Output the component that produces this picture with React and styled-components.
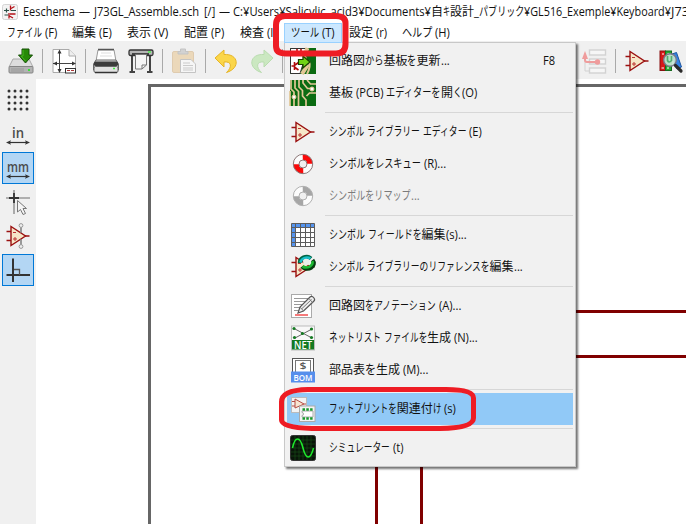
import React, { useLayoutEffect, useRef, useState } from "react";
import styled, { createGlobalStyle } from "styled-components";

const GlobalStyle = createGlobalStyle`
  * { box-sizing: border-box; }
  html, body { margin: 0; background: #fff; overflow: hidden; }
  body {
    font: 12px/20px "Open Sans", "Noto Sans CJK JP", sans-serif;
    color: #111;
  }
  svg { display: block; flex: none; overflow: visible; }
`;

/* ---------- text ---------- */

const Line = styled.span`
  display: inline-flex;
  flex: none;
  width: ${(p) => p.$w}px;
  white-space: pre;
`;
const Run = styled.span`
  display: block;
  flex: none;
`;
const Glyphs = styled.span`
  display: inline-block;
  transform-origin: 0 50%;
`;

const KANA = /[\u3040-\u30ff]/;
const HAN = /[\u4e00-\u9fff]/;
const kindOf = (c) => (KANA.test(c) ? "kana" : HAN.test(c) ? "han" : "latin");

function splitRuns(text) {
  const runs = [];
  for (const c of text) {
    const kind = kindOf(c);
    const last = runs[runs.length - 1];
    if (last && last.kind === kind) last.text += c;
    else runs.push({ kind, text: c });
  }
  return runs;
}

/* Narrows the kana (or the latin, if there is no kana) so the line is w wide. */
function Fit({ w, children }) {
  const ref = useRef(null);
  const [sizes, setSizes] = useState(null);
  const runs = splitRuns(children);
  useLayoutEffect(() => {
    const widths = [...ref.current.querySelectorAll("[data-g]")].map((e) => e.offsetWidth);
    const flexKind = runs.some((r) => r.kind === "kana") ? "kana" : "latin";
    const base = { han: 1, latin: 0.93, kana: 1 };
    let fixed = 0;
    let flex = 0;
    runs.forEach((r, i) => {
      if (r.kind === flexKind) flex += widths[i];
      else fixed += widths[i] * base[r.kind];
    });
    const k = flex ? (w - fixed) / flex : 1;
    setSizes(
      runs.map((r, i) => {
        const s = r.kind === flexKind ? k : base[r.kind];
        return { s, width: widths[i] * s };
      })
    );
  }, [w, children]);
  return (
    <Line ref={ref} $w={w}>
      {runs.map((r, i) => (
        <Run key={i} style={sizes ? { width: sizes[i].width } : undefined}>
          <Glyphs data-g="" style={sizes ? { transform: `scaleX(${sizes[i].s})` } : undefined}>
            {r.text}
          </Glyphs>
        </Run>
      ))}
    </Line>
  );
}

/* ---------- layout ---------- */

const Window = styled.div`
  position: relative;
  width: 686px;
  height: 524px;
  overflow: hidden;
  display: flex;
  flex-direction: column;
`;
const TitleBar = styled.header`
  display: flex;
  align-items: center;
  height: 22px;
  padding: 1px 0 0 2px;
  flex: none;
`;
const TitlePart = styled.span`
  display: flex;
  flex: none;
  margin-left: ${(p) => p.$gap || 0}px;
`;
const MenuBar = styled.nav`
  display: flex;
  align-items: center;
  height: 19px;
  flex: none;
`;
const MenuTitle = styled.span`
  display: flex;
  align-items: center;
  flex: none;
  height: 20px;
  margin: 3px 0 0 ${(p) => p.$gap}px;
  padding: 0 ${(p) => (p.$open ? 6 : 0)}px;
  border: ${(p) => (p.$open ? "1px solid #99d1ff" : "0")};
  background: ${(p) => (p.$open ? "#cce8ff" : "transparent")};
  z-index: 1;
`;
const ToolBar = styled.div`
  display: flex;
  align-items: center;
  height: 38px;
  flex: none;
  padding-top: 2px;
  background: #f0f0f0;
`;
const Tool = styled.span`
  flex: none;
  margin-left: ${(p) => p.$gap}px;
  opacity: ${(p) => (p.$off ? 0.42 : 1)};
`;
const Divider = styled.i`
  flex: none;
  width: 1px;
  height: 24px;
  margin-left: ${(p) => p.$gap}px;
  background: #a9a9a9;
`;
const Body = styled.div`
  display: flex;
  flex: 1;
`;
const SideBar = styled.aside`
  display: flex;
  flex-direction: column;
  gap: 2px;
  width: 36px;
  padding: 5px 2px;
  background: #f0f0f0;
`;
const SideButton = styled.span`
  display: flex;
  align-items: center;
  justify-content: center;
  width: 32px;
  height: 32px;
  border: 1px solid ${(p) => (p.$on ? "#0078d7" : "transparent")};
  background: ${(p) => (p.$on ? "#b3d6f4" : "transparent")};
`;
const Canvas = styled.main`
  flex: 1;
`;
const Menu = styled.div`
  position: absolute;
  left: 284px;
  top: 42px;
  width: 292px;
  height: 425px;
  padding: 2px;
  background: #f1f1f1;
  border: 1px solid #c8c8c8;
  box-shadow: 2px 2px 2px rgba(0, 0, 0, 0.55);
`;
const Item = styled.div`
  display: flex;
  align-items: center;
  height: 32px;
  padding-left: 3px;
  padding-right: 18px;
  background: ${(p) => (p.$hot ? "#91c9f7" : "transparent")};
  color: ${(p) => (p.$off ? "#7b7b7b" : "#111")};
`;
const ItemLabel = styled.span`
  flex: 1;
  margin: -1px 0 0 13px;
  display: flex;
`;
const Separator = styled.div`
  height: 7px;
  padding-left: 38px;
  &::before {
    content: "";
    display: block;
    height: 3px;
    border-bottom: 1px solid #d7d7d7;
  }
`;
const Markup = styled.svg`
  position: absolute;
  inset: 0;
  pointer-events: none;
  z-index: 3;
`;
const IconText = styled.text`
  font: ${(p) => p.$font};
`;

/* ---------- icons ---------- */

const Icon = ({ children, w = 26, h = 26 }) => (
  <svg width={w} height={h} viewBox={`0 0 ${w} ${h}`} fill="none">
    {children}
  </svg>
);

const OpAmpShape = () => (
  <g>
    <path d="M6 3.500V22.500L20.500 13Z" fill="#f6e7c8" stroke="#9b1111" strokeWidth="1.400" />
    <path d="M1.500 8.500H6M1.500 17.500H6M20 13H24.500" stroke="#9b1111" strokeWidth="1.400" />
    <path d="M8 9.500H11M8 16H12M10 14V18" stroke="#b33" />
  </g>
);
const OpAmp = () => <Icon><OpAmpShape /></Icon>;

const AppIcon = () => (
  <Icon w={16} h={16}>
    <rect x=".5" y=".5" width="15" height="15" rx="2" fill="#f3f3f3" stroke="#d4d4d4" />
    <path d="M8.500 1.500V6.500M9 4.500L12.500 2.500M7 9V14.500M7.500 12L11 14M8 10H13.500" stroke="#b51218" strokeWidth="1.300" />
    <path d="M2 6.500H7M9 6.500H14M4.500 4.500V8.500M2.500 11H6.500" stroke="#2c5148" strokeWidth="1.200" />
  </Icon>
);
const Save = () => (
  <Icon>
    <path d="M5 11H21L25 19H1Z" fill="#ddd" stroke="#aaa" />
    <rect x="1" y="18.500" width="24" height="6.500" rx="1" fill="#b3b3b3" stroke="#858585" />
    <path d="M3 21H16M3 23H16" stroke="#999" />
    <rect x="20" y="21" width="2" height="2" fill="#3be03b" />
    <path d="M14 1H21V7H24.500L17.500 15L10.500 7H14Z" fill="#278a08" stroke="#145004" />
    <path d="M15 2V8H13L17.500 13" stroke="#49b822" />
  </Icon>
);
const PageSize = () => (
  <Icon>
    <path d="M2 1.500H18L24.500 8V24.500H2Z" fill="#fff" stroke="#aaa" />
    <path d="M18 1.500V8H24.500" fill="#eee" stroke="#aaa" />
    <path d="M8.500 3V24M2 15.500H24" stroke="#444" />
    <path d="M8.500 1.500L6.500 5.500H10.500ZM8.500 25L6.500 21H10.500ZM2 15.500L6 13.500V17.500ZM25 15.500L21 13.500V17.500Z" fill="#333" />
    <rect x="14.500" y="20.500" width="10" height="4.500" fill="#fff" stroke="#333" />
    <path d="M16 22.500H19M20 22.500H23" stroke="#a33" />
  </Icon>
);
const Printer = () => (
  <Icon>
    <path d="M5 2H21L23 13H3Z" fill="#fff" stroke="#999" />
    <path d="M5 1.500H21" stroke="#555" strokeWidth="1.500" />
    <path d="M8 5H18M7 8H19" stroke="#ddd" />
    <path d="M3 12H23L25.500 16V22H.5V16Z" fill="#dcdcdc" stroke="#666" />
    <rect x="1" y="13.500" width="24" height="4.500" rx="1.500" fill="#3c3c3c" />
    <rect x="1" y="18.500" width="24" height="6" rx="1.500" fill="#e2e2e2" stroke="#666" />
    <path d="M2 24.500H24" stroke="#333" strokeWidth="1.500" />
    <path d="M20 20.500H22" stroke="#4e4" strokeWidth="1.500" />
  </Icon>
);
const Plotter = () => (
  <Icon>
    <path d="M4 7V24M22 7V24M1.500 24H7M19 24H24.500" stroke="#444" strokeWidth="2" />
    <rect x="1" y="2" width="24" height="5.500" rx="1.500" fill="#b5b5b5" stroke="#333" strokeWidth="1.300" />
    <path d="M4 6H21" stroke="#222" strokeWidth="1.500" />
    <path d="M20 4H23" stroke="#5e5" strokeWidth="1.600" />
    <path d="M7.500 6.500H18.500V17L14 21H7.500Z" fill="#f5f5f5" stroke="#777" />
    <path d="M14 21V17H18.500" stroke="#777" />
  </Icon>
);
const Paste = () => (
  <Icon>
    <rect x="1.500" y="3.500" width="21" height="21" rx="1.500" fill="#e6b970" stroke="#c89a58" />
    <path d="M7 6V3.500H9.500V1H14.500V3.500H17V6Z" fill="#aaa" stroke="#888" />
    <path d="M9.500 11.500H20L24.500 16V24.500H9.500Z" fill="#fff" stroke="#888" />
    <path d="M12 15H19M12 17.500H22M12 20H22M12 22H22" stroke="#999" />
  </Icon>
);
const UndoArrow = () => (
  <path d="M1 10L10 2V6.500C24.500 5.500 27 20 12.500 24.500C18.500 19 17.500 13 10 14V19Z" />
);
const Undo = () => (
  <Icon><g fill="#fbd649" stroke="#e6b425"><UndoArrow /></g></Icon>
);
const Redo = () => (
  <Icon><g transform="translate(26 0) scale(-1 1)" fill="#99df82" stroke="#6fc158"><UndoArrow /></g></Icon>
);
const Hierarchy = () => (
  <Icon>
    <path d="M4 9V23H9" stroke="#aaa" />
    <g fill="#fff" stroke="#aaa" strokeWidth="1.400">
      <rect x="8.500" y="2" width="16" height="5" />
      <rect x="8.500" y="11" width="16" height="5" />
      <rect x="8.500" y="20" width="16" height="5" />
    </g>
    <path d="M4 9V12Q4 14 6 14H16" stroke="#ef2929" strokeWidth="2" />
    <path d="M4 3L1 11H7Z" fill="#ef2929" />
    <circle cx="16.500" cy="14" r="2.700" fill="#ef2929" />
  </Icon>
);
const Library = () => (
  <Icon>
    <rect x="2" y="3" width="5.500" height="19.500" fill="#d71919" stroke="#811" />
    <rect x="7.500" y="3" width="6" height="19.500" fill="#23ad32" stroke="#176a20" />
    <path d="M14 6L18.500 4.500L23.500 19L19 21Z" fill="#3484e5" stroke="#1f559f" />
    <path d="M4 6H6M9.500 5.500H11.500M3.500 20H6M9 20H11" stroke="#fff" />
    <circle cx="12" cy="12" r="6.300" fill="#c5e5d3" fillOpacity=".92" stroke="#778" strokeWidth="1.400" />
    <path d="M9.500 8V12.500Q11 15.500 13.500 12.500V8" stroke="#4fae70" strokeWidth="1.700" />
    <path d="M17.500 17.500L23 23" stroke="#2a2a2a" strokeWidth="3.200" strokeLinecap="round" />
  </Icon>
);

const PcbEditor = () => (
  <Icon>
    <rect width="26" height="26" fill="#0b6b12" />
    <g stroke="#e2c796" strokeWidth="1.700">
      <path d="M1 0V9L4 12V26M5 0V8L8.500 11.500V26" />
      <path d="M9 0V7L12.500 10.500V16L16 20V26M13 0V3L17.500 8.500H22" />
      <path d="M17 0L20.500 4H26M26 13H19.500L16.500 16" />
      <path d="M0 11V26" />
    </g>
    <circle cx="22" cy="9" r="2" fill="#fff" stroke="#e2c796" />
    <circle cx="4" cy="17" r="2" fill="#fff" stroke="#e2c796" />
  </Icon>
);
const UpdatePcb = () => (
  <Icon>
    <rect width="26" height="26" fill="#0b6b12" />
    <path d="M.5 .5H18L10 25.500H.5Z" fill="#fff" stroke="#333" />
    <path d="M17.500 0L14 8L17 18L12 26" stroke="#e2c796" strokeWidth="4" />
    <path d="M19 13Q21 19 17 26" stroke="#e2c796" strokeWidth="2" />
    <path d="M4.500 14V22M4.500 18H1.500M5 17L8.500 14.500M5 19.500L8.500 22M7 1V7M11 1V5" stroke="#b00d0d" strokeWidth="1.600" />
    <path d="M8.500 11.500H13V8L20 14L13 20V16.500H8.500Z" fill="#70d216" stroke="#163e00" strokeWidth="1.200" />
  </Icon>
);
const Buoy = ({ gray }) => (
  <Icon>
    <circle cx="13" cy="13" r="9.700" fill="#fcfcfc" />
    <path d="M13 3.300A9.700 9.700 0 0 0 3.300 13H9A4 4 0 0 1 13 9ZM13 22.700A9.700 9.700 0 0 0 22.700 13H17A4 4 0 0 1 13 17Z"
      fill={gray ? "#a6a6a6" : "#fa0909"} transform="rotate(88 13 13)" />
    <g stroke={gray ? "#b0b0b0" : "#8d7878"}>
      <circle cx="13" cy="13" r="9.700" />
      <circle cx="13" cy="13" r="4" fill="#f1f1f1" />
    </g>
  </Icon>
);
const Table = () => (
  <Icon>
    <rect x="1.500" y="1.500" width="23" height="23" fill="#fff" />
    <path d="M1.500 1.500H24.500V5.500H5.500V24.500H1.500Z" fill="#5594ee" />
    <path d="M1.500 1.500H24.500V24.500H1.500ZM1 5.500H25M1 10.500H25M1 15.500H25M1 20.500H25M5.500 1V25M10.500 1V25M15.500 1V25M20.500 1V25" stroke="#5c5c5c" />
  </Icon>
);
const LibraryRefs = () => (
  <Icon>
    <OpAmpShape />
    <path d="M10 9A6.500 5.500 0 0 1 21 4.500" stroke="#064" strokeWidth="4.200" />
    <path d="M22.500 6A6.500 5.500 0 0 1 12 12.500" stroke="#053d10" strokeWidth="4.200" />
    <path d="M10.500 8.500A6.500 5.500 0 0 1 20.500 4.500" stroke="#18bfc9" strokeWidth="2.600" />
    <path d="M22.500 7A6.500 5.500 0 0 1 12.500 12.500" stroke="#1bb831" strokeWidth="2.600" />
    <circle cx="16.300" cy="8" r="3.200" fill="#e9efe9" />
  </Icon>
);
const Annotate = () => (
  <Icon>
    <rect x="1.500" y="1.500" width="20" height="23" fill="#fff" stroke="#aaa" />
    <path d="M4 5.500H18M4 8.500H17M4 11.500H14M4 14.500H11M4 17.500H9" stroke="#999" />
    <path d="M5 22H18" stroke="#ef2020" strokeWidth="1.200" />
    <path d="M8 20L10 14L20 4Q22 2.500 24 5Q25.500 7 23.500 8.500L13.500 18Z" fill="#eee" stroke="#555" strokeWidth="1.200" />
    <path d="M12 15.500L21.500 6.500M10 14L13.500 18M19 5.500L22.500 9.500" stroke="#777" />
  </Icon>
);
const Netlist = () => (
  <Icon>
    <rect x="1.500" y="1" width="23" height="24" fill="#f8f8f8" stroke="#bbb" />
    <path d="M4 3.500L22 13M22 4L5 13" stroke="#666" />
    <g fill="#147a22">
      <circle cx="4" cy="3.500" r="1.600" /><circle cx="21.500" cy="4" r="1.600" />
      <circle cx="12.500" cy="8.500" r="1.600" /><circle cx="4.500" cy="12.500" r="1.600" />
      <circle cx="21.500" cy="12.500" r="1.600" />
      <rect x="2" y="15" width="22" height="9.500" />
    </g>
    <IconText $font='600 10px/10px "Open Sans", sans-serif' x="13" y="23.500" textAnchor="middle" textLength="18" lengthAdjust="spacingAndGlyphs" fill="#fff">NET</IconText>
  </Icon>
);
const Bom = () => (
  <Icon>
    <rect x="2.500" y="1.500" width="21" height="16" fill="#fff" stroke="#555" />
    <rect x="5.500" y="3.500" width="15" height="12" fill="#fff" stroke="#777" />
    <IconText $font='600 8.500px/8px "Open Sans", sans-serif' x="13" y="11.500" textAnchor="middle" textLength="7" lengthAdjust="spacingAndGlyphs" fill="#555">$</IconText>
    <rect x="1" y="14.500" width="24" height="11" fill="#568fec" />
    <IconText $font='600 9.500px/9px "Open Sans", sans-serif' x="13" y="24" textAnchor="middle" textLength="19" lengthAdjust="spacingAndGlyphs" fill="#fff">BOM</IconText>
  </Icon>
);
const Assign = () => (
  <Icon>
    <rect x="1.500" y="1.500" width="15" height="15" fill="#f3f3f3" stroke="#bbb" />
    <path d="M5 3V12L14 8ZM2 5.500H5M2 10H5M14 8H16" fill="#f8e4d0" stroke="#b64a42" />
    <rect x="9.500" y="10" width="15.500" height="15.500" fill="#f3f3f3" stroke="#aaa" />
    <path d="M12 15H23V21H12V19.500A1.500 1.500 0 0 0 12 16.500Z" fill="#fff" stroke="#aaa" />
    <path d="M12.500 13.500H23M12.500 22.500H23" stroke="#179a2c" strokeWidth="2.600" strokeDasharray="2.500 1.300" />
  </Icon>
);
const Simulator = () => (
  <Icon>
    <rect x=".5" y=".5" width="25" height="25" rx="2" fill="#091509" stroke="#333" />
    <path d="M5 1V25M9 1V25M13 1V25M17 1V25M21 1V25M1 5H25M1 9H25M1 13H25M1 17H25M1 21H25" stroke="#174c19" strokeWidth=".7" />
    <path d="M2.500 13C5 1 10 1 13 13S20.500 25 23.500 13" stroke="#1eeb2c" strokeWidth="1.500" />
  </Icon>
);

const Grid = () => (
  <Icon>
    <g fill="#333">
      {[4, 10, 16, 22].flatMap((x) => [4, 10, 16, 22].map((y) => <circle key={`${x}-${y}`} cx={x} cy={y} r="1.500" />))}
    </g>
  </Icon>
);
const UnitArrow = () => (
  <g>
    <path d="M4 21.500H22" stroke="#333" strokeWidth="1.200" />
    <path d="M1 21.500L6 19.200L5 21.500L6 23.800ZM25 21.500L20 19.200L21 21.500L20 23.800Z" fill="#333" />
  </g>
);
const Unit = ({ name, len }) => (
  <Icon>
    <IconText $font='600 15px/15px "Open Sans", sans-serif' x="13" y="16.500" textAnchor="middle" textLength={len} lengthAdjust="spacingAndGlyphs" fill="#4b4b4b">{name}</IconText>
    <UnitArrow />
  </Icon>
);
const CursorShape = () => (
  <Icon>
    <path d="M9 1V25M1 9H25" stroke="#999" strokeWidth="1.600" />
    <path d="M9 4V14M4 9H14" stroke="#333" strokeWidth="1.800" />
    <path d="M12.500 11.500V23L15.500 20.500L18 25.500L20.500 24.500L18 19.500H21.500Z" fill="#f4f4f4" stroke="#777" />
  </Icon>
);
const HiddenPins = () => (
  <Icon>
    <path d="M16 4V22" stroke="#999" strokeWidth="2" />
    <OpAmpShape />
    <path d="M16 4V9.500M16 16.500V22" stroke="#999" strokeWidth="2" />
    <circle cx="16" cy="2.500" r="1.900" fill="#eee" stroke="#999" />
    <circle cx="16" cy="23.500" r="1.900" fill="#eee" stroke="#999" />
  </Icon>
);
const Ortho = () => (
  <Icon>
    <path d="M8 1.500V25M1.500 18H25" stroke="#333" strokeWidth="2" />
    <path d="M9 12.500H14.500V18" stroke="#555" strokeWidth="1.300" />
  </Icon>
);

/* ---------- data ---------- */

const TITLE = [
  [5, 52, "Eeschema"], [4, 11, "—"], [4, 105, "J73GL_Assemble.sch"], [5, 11, "[/]"],
  [4, 11, "—"], [3, 198, "C:¥Users¥Salicylic_acid3¥Documents¥"], [0, 43, "自キ設計"],
  [0, 50, "_パブリック"], [0, 147, "¥GL516_Exemple¥Keyboard¥"], [0, 18, "J73"],
];
const MENUS = [
  [7, 50, "ファイル (F)"], [15, 40, "編集 (E)"], [15, 41, "表示 (V)"], [16, 40, "配置 (P)"],
  [16, 37, "検査 (I)"], [7, 44, "ツール (T)", true], [7, 38, "設定 (r)"], [15, 48, "ヘルプ (H)"],
];
const ITEMS = [
  { icon: <UpdatePcb />, label: "回路図から基板を更新...", w: 120, keys: "F8" },
  { icon: <PcbEditor />, label: "基板 (PCB) エディターを開く(O)", w: 148 },
  null,
  { icon: <OpAmp />, label: "シンボル ライブラリー エディター (E)", w: 153 },
  { icon: <Buoy />, label: "シンボルをレスキュー (R)...", w: 117 },
  { icon: <Buoy gray />, label: "シンボルをリマップ...", w: 90, off: true },
  null,
  { icon: <Table />, label: "シンボル フィールドを編集(s)...", w: 137 },
  { icon: <LibraryRefs />, label: "シンボル ライブラリーのリファレンスを編集...", w: 193 },
  null,
  { icon: <Annotate />, label: "回路図をアノテーション (A)...", w: 132 },
  { icon: <Netlist />, label: "ネットリスト ファイルを生成 (N)...", w: 149 },
  { icon: <Bom />, label: "部品表を生成 (M)...", w: 99 },
  null,
  { icon: <Assign />, label: "フットプリントを関連付け (s)", w: 127, hot: true },
  null,
  { icon: <Simulator />, label: "シミュレーター (t)", w: 74 },
];

export default function App() {
  return (
    <Window>
      <GlobalStyle />
      <TitleBar>
        <AppIcon />
        {TITLE.map(([gap, w, text], i) => (
          <TitlePart key={i} $gap={gap}><Fit w={w}>{text}</Fit></TitlePart>
        ))}
      </TitleBar>
      <MenuBar>
        {MENUS.map(([gap, w, text, open]) => (
          <MenuTitle key={text} $gap={gap} $open={open}><Fit w={w}>{text}</Fit></MenuTitle>
        ))}
      </MenuBar>
      <ToolBar>
        <Tool $gap={8}><Save /></Tool>
        <Divider $gap={8} />
        <Tool $gap={8}><PageSize /></Tool>
        <Divider $gap={8} />
        <Tool $gap={7}><Printer /></Tool>
        <Tool $gap={9}><Plotter /></Tool>
        <Divider $gap={8} />
        <Tool $gap={8} $off><Paste /></Tool>
        <Divider $gap={8} />
        <Tool $gap={8}><Undo /></Tool>
        <Tool $gap={8} $off><Redo /></Tool>
        <Divider $gap={8} />
        <Tool $gap={298} $off><Hierarchy /></Tool>
        <Divider $gap={8} />
        <Tool $gap={8}><OpAmp /></Tool>
        <Tool $gap={8}><Library /></Tool>
      </ToolBar>
      <Body>
        <SideBar>
          <SideButton><Grid /></SideButton>
          <SideButton><Unit name="in" len="12" /></SideButton>
          <SideButton $on><Unit name="mm" len="22" /></SideButton>
          <SideButton><CursorShape /></SideButton>
          <SideButton><HiddenPins /></SideButton>
          <SideButton $on><Ortho /></SideButton>
        </SideBar>
        <Canvas>
          <svg width="650" height="445" viewBox="36 79 650 445" fill="none">
            <path d="M149.500 524V85.500H686" stroke="#666" strokeWidth="3" />
            <path d="M376.500 524V311.500H686M421.500 524V356.500H686" stroke="#800000" strokeWidth="3" />
          </svg>
        </Canvas>
      </Body>
      <Menu>
        {ITEMS.map((it, i) =>
          it ? (
            <Item key={i} $hot={it.hot} $off={it.off}>
              {it.icon}
              <ItemLabel><Fit w={it.w}>{it.label}</Fit></ItemLabel>
              {it.keys && <Fit w={12}>{it.keys}</Fit>}
            </Item>
          ) : (
            <Separator key={i} />
          )
        )}
      </Menu>
      <Markup width="686" height="524" fill="none" stroke="#ee1c24">
        <path strokeWidth="6" d="M285 16H336Q345.500 16 345.500 23V44Q345.500 53.500 336 53.500H286Q276 53.500 276 46V25Q276 16 285 16Z" />
        <path strokeWidth="5" d="M308 389.500H446Q473.500 389.500 473.500 398V418Q473.500 428 440 428.500H312Q281.500 427.500 281.500 420V402Q281.500 390 308 389.500Z" />
      </Markup>
    </Window>
  );
}
